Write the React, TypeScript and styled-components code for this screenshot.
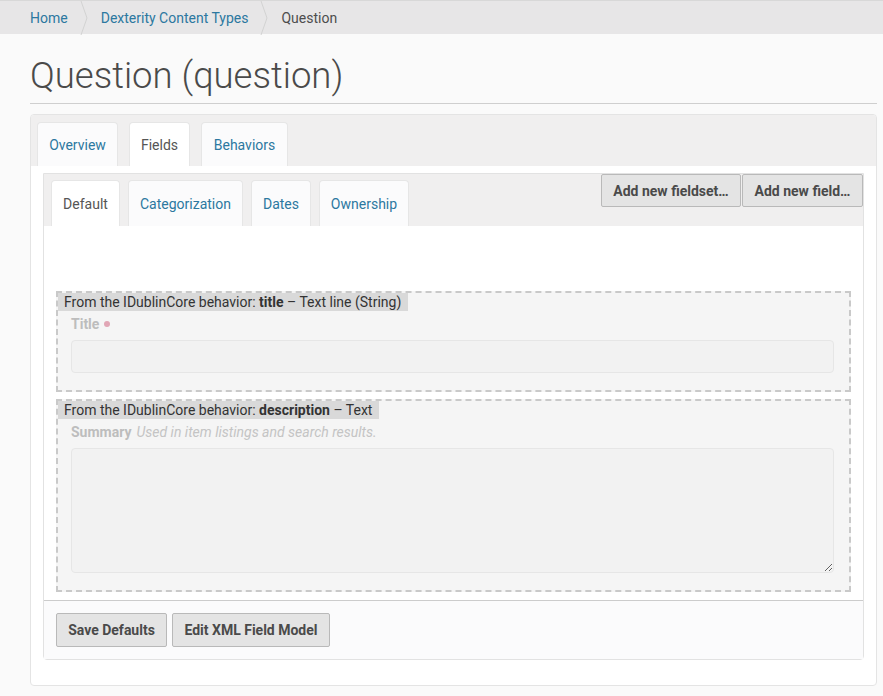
import { createGlobalStyle, styled } from 'styled-components'

const GlobalStyle = createGlobalStyle`
  html, body {
    margin: 0;
    padding: 0;
    background: #fafafa;
    font-family: Roboto, "Liberation Sans", sans-serif;
    color: #4d4d4d;
  }
  * {
    box-sizing: border-box;
  }
`

const crumbs = ['Home', 'Dexterity Content Types']
const mainTabs = [
  { label: 'Overview', width: 81 },
  { label: 'Fields', width: 61, active: true },
  { label: 'Behaviors', width: 87 },
]
const fieldsetTabs = [
  { label: 'Default', width: 69, active: true },
  { label: 'Categorization', width: 115 },
  { label: 'Dates', width: 60 },
  { label: 'Ownership', width: 90 },
]

const Chevron = () => (
  <svg width="8" height="34" viewBox="0 0 8 34">
    <path d="M1 0 L7 17 L1 34" fill="none" stroke="#d2d2d2" strokeWidth="1" />
  </svg>
)

export default function App() {
  return (
    <>
      <GlobalStyle />
      <Breadcrumbs>
        {crumbs.map((c) => (
          <CrumbItem key={c}>
            <CrumbLink>{c}</CrumbLink>
            <Chevron />
          </CrumbItem>
        ))}
        <CrumbCurrent>Question</CrumbCurrent>
      </Breadcrumbs>

      <Main>
        <Title>Question (question)</Title>

        <OuterPanel>
          <TabBar $pad="7px 6px 0" $gap={11}>
            {mainTabs.map((t) => (
              <Tab key={t.label} $active={t.active} $width={t.width} $height={44}>
                {t.label}
              </Tab>
            ))}
          </TabBar>

          <OuterBody>
            <InnerPanel>
              <InnerHeader>
                <TabBar $pad="6px 7px 0" $gap={8}>
                  {fieldsetTabs.map((t) => (
                    <Tab key={t.label} $active={t.active} $width={t.width} $height={46}>
                      {t.label}
                    </Tab>
                  ))}
                </TabBar>
                <HeaderActions>
                  <Button $width={140}>Add new fieldset…</Button>
                  <Button $width={121}>Add new field…</Button>
                </HeaderActions>
              </InnerHeader>

              <FieldsArea>
                <FieldBox>
                  <FieldTag>
                    From the IDublinCore behavior: <b>title</b> – Text line (String)
                  </FieldTag>
                  <FieldLabel>
                    Title <RequiredDot />
                  </FieldLabel>
                  <TextInput readOnly />
                </FieldBox>

                <FieldBox>
                  <FieldTag>
                    From the IDublinCore behavior: <b>description</b> – Text
                  </FieldTag>
                  <FieldLabel>
                    Summary <Help>Used in item listings and search results.</Help>
                  </FieldLabel>
                  <TextArea readOnly />
                </FieldBox>
              </FieldsArea>

              <Footer>
                <Button $width={111} $height={34}>Save Defaults</Button>
                <Button $width={158} $height={34}>Edit XML Field Model</Button>
              </Footer>
            </InnerPanel>
          </OuterBody>
        </OuterPanel>
      </Main>
    </>
  )
}

const Breadcrumbs = styled.nav`
  display: flex;
  align-items: center;
  height: 34px;
  padding-left: 30px;
  background: #e7e6e7;
  border-top: 1px solid #d8d8d8;
  font-size: 14px;
`

const CrumbItem = styled.div`
  display: flex;
  align-items: center;
  gap: 12px;
  margin-right: 13px;
`

const CrumbLink = styled.a`
  color: #2c78a0;
  text-decoration: none;
`

const CrumbCurrent = styled.span`
  color: #4d4d4d;
`

const Main = styled.main`
  padding: 0 6px 0 30px;
`

const Title = styled.h1`
  margin: 20px 0 0;
  padding-bottom: 5px;
  font-size: 36.5px;
  font-weight: 300;
  line-height: 44px;
  color: #4a4a4a;
  border-bottom: 1px solid #cfcfcf;
`

const OuterPanel = styled.section`
  margin-top: 10px;
  background: #ffffff;
  border: 1px solid #e4e4e4;
  border-radius: 4px;
  overflow: hidden;
`

const TabBar = styled.div<{ $pad: string; $gap: number }>`
  display: flex;
  align-items: flex-end;
  gap: ${(p) => p.$gap}px;
  padding: ${(p) => p.$pad};
  background: #f0efef;
`

const Tab = styled.div<{ $active?: boolean; $width: number; $height: number }>`
  display: flex;
  align-items: center;
  justify-content: center;
  width: ${(p) => p.$width}px;
  height: ${(p) => p.$height}px;
  font-size: 14px;
  color: ${(p) => (p.$active ? '#555555' : '#2c78a0')};
  background: ${(p) => (p.$active ? '#ffffff' : '#fbfbfc')};
  border: 1px solid #e6e6e6;
  border-bottom: none;
  border-radius: 4px 4px 0 0;
`

const OuterBody = styled.div`
  padding: 7px 12px 25px;
`

const InnerPanel = styled.div`
  border: 1px solid #e2e2e2;
  border-radius: 0 0 4px 4px;
  background: #ffffff;
`

const InnerHeader = styled.div`
  display: flex;
  justify-content: space-between;
  align-items: flex-start;
  background: #f0efef;
`

const HeaderActions = styled.div`
  display: flex;
  gap: 1px;
`

const Button = styled.button<{ $width: number; $height?: number }>`
  width: ${(p) => p.$width}px;
  height: ${(p) => p.$height ?? 33}px;
  padding: 0;
  font-family: Roboto, "Liberation Sans", sans-serif;
  font-size: 14px;
  font-weight: 700;
  color: #4a4a4a;
  background: #e4e4e4;
  border: 1px solid #b9b9b9;
  border-radius: 2px;
`

const FieldsArea = styled.div`
  display: flex;
  flex-direction: column;
  gap: 7px;
  padding: 65px 12px 8px;
`

const FieldBox = styled.div`
  display: flex;
  flex-direction: column;
  align-items: flex-start;
  padding: 0 15px 17px 0;
  background: #f5f5f5;
  border: 2px dashed #c9c9c9;
`

const FieldTag = styled.div`
  height: 18px;
  line-height: 18px;
  padding: 0 7px 0 6px;
  font-size: 14px;
  color: #333333;
  background: #d9d9d9;

  b {
    font-weight: 700;
  }
`

const FieldLabel = styled.div`
  display: flex;
  align-items: center;
  gap: 5px;
  margin: 4px 0 0 13px;
  height: 18px;
  font-size: 14px;
  font-weight: 700;
  color: #bdbdbd;
`

const RequiredDot = styled.span`
  width: 6px;
  height: 6px;
  border-radius: 50%;
  background: #e1a6b5;
`

const Help = styled.span`
  font-weight: 400;
  font-style: italic;
  color: #c4c4c4;
`

const TextInput = styled.input`
  align-self: stretch;
  height: 33px;
  margin: 7px 0 0 13px;
  background: #f2f2f2;
  border: 1px solid #e6e6e6;
  border-radius: 4px;
  outline: none;
`

const TextArea = styled.textarea`
  display: block;
  align-self: stretch;
  height: 125px;
  margin: 7px 0 0 13px;
  background: #f2f2f2;
  border: 1px solid #e6e6e6;
  border-radius: 4px;
  outline: none;
  resize: vertical;
`

const Footer = styled.div`
  display: flex;
  gap: 5px;
  padding: 12px;
  background: #fbfbfc;
  border-top: 1px solid #cccccc;
`
